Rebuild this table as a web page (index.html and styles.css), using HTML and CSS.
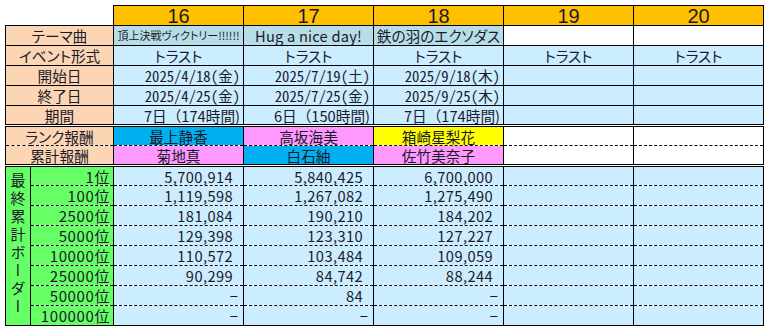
FILE: index.html
```html
<!DOCTYPE html>
<html lang="ja">
<head>
<meta charset="utf-8">
<link rel="stylesheet" href="styles.css">
</head>
<body>
<table class="sheet">
  <colgroup>
    <col class="c-vert"><col class="c-rank">
    <col class="c-data"><col class="c-data"><col class="c-data"><col class="c-data"><col class="c-data">
  </colgroup>
  <tr class="head">
    <td class="blank" colspan="2"></td>
    <td class="num">16</td><td class="num">17</td><td class="num">18</td><td class="num">19</td><td class="num">20</td>
  </tr>
  <tr>
    <td class="label" colspan="2">テーマ曲</td>
    <td class="theme small">頂上決戦ヴィクトリー!!!!!!</td>
    <td class="theme latin">Hug a nice day!</td>
    <td class="theme">鉄の羽のエクソダス</td>
    <td class="white"></td><td class="white"></td>
  </tr>
  <tr>
    <td class="label" colspan="2">イベント形式</td>
    <td class="val center">トラスト</td><td class="val center">トラスト</td><td class="val center">トラスト</td><td class="val center">トラスト</td><td class="val center">トラスト</td>
  </tr>
  <tr>
    <td class="label" colspan="2">開始日</td>
    <td class="val date">2025/4/18(金)</td><td class="val date">2025/7/19(土)</td><td class="val date">2025/9/18(木)</td><td class="val"></td><td class="val"></td>
  </tr>
  <tr>
    <td class="label" colspan="2">終了日</td>
    <td class="val date">2025/4/25(金)</td><td class="val date">2025/7/25(金)</td><td class="val date">2025/9/25(木)</td><td class="val"></td><td class="val"></td>
  </tr>
  <tr class="dbl-b">
    <td class="label" colspan="2">期間</td>
    <td class="val period">7日（174時間)</td><td class="val period">6日（150時間)</td><td class="val period">7日（174時間)</td><td class="val"></td><td class="val"></td>
  </tr>
  <tr class="dbl-t dash-b">
    <td class="label" colspan="2">ランク報酬</td>
    <td class="name blue">最上静香</td><td class="name pink">高坂海美</td><td class="name yellow">箱崎星梨花</td><td class="white"></td><td class="white"></td>
  </tr>
  <tr class="dash-t dbl-b">
    <td class="label" colspan="2">累計報酬</td>
    <td class="name pink">菊地真</td><td class="name blue">白石紬</td><td class="name pink">佐竹美奈子</td><td class="white"></td><td class="white"></td>
  </tr>
  <tr class="dbl-t dash-b">
    <td class="vert" rowspan="8"><span>最終累計ボーダー</span></td>
    <td class="rank">1位</td>
    <td class="val n">5,700,914</td><td class="val n">5,840,425</td><td class="val n">6,700,000</td><td class="val"></td><td class="val"></td>
  </tr>
  <tr class="dash-t dash-b">
    <td class="rank">100位</td>
    <td class="val n">1,119,598</td><td class="val n">1,267,082</td><td class="val n">1,275,490</td><td class="val"></td><td class="val"></td>
  </tr>
  <tr class="dash-t dash-b">
    <td class="rank">2500位</td>
    <td class="val n">181,084</td><td class="val n">190,210</td><td class="val n">184,202</td><td class="val"></td><td class="val"></td>
  </tr>
  <tr class="dash-t dash-b">
    <td class="rank">5000位</td>
    <td class="val n">129,398</td><td class="val n">123,310</td><td class="val n">127,227</td><td class="val"></td><td class="val"></td>
  </tr>
  <tr class="dash-t dash-b">
    <td class="rank">10000位</td>
    <td class="val n">110,572</td><td class="val n">103,484</td><td class="val n">109,059</td><td class="val"></td><td class="val"></td>
  </tr>
  <tr class="dash-t dash-b">
    <td class="rank">25000位</td>
    <td class="val n">90,299</td><td class="val n">84,742</td><td class="val n">88,244</td><td class="val"></td><td class="val"></td>
  </tr>
  <tr class="dash-t dash-b">
    <td class="rank">50000位</td>
    <td class="val dash">−</td><td class="val n">84</td><td class="val dash">−</td><td class="val"></td><td class="val"></td>
  </tr>
  <tr class="dash-t">
    <td class="rank">100000位</td>
    <td class="val dash">−</td><td class="val dash">−</td><td class="val dash">−</td><td class="val"></td><td class="val"></td>
  </tr>
</table>
</body>
</html>
```

FILE: styles.css
```css
html, body {
  margin: 0;
  padding: 0;
  background: #fff;
}

body {
  padding: 5px 0 0 5px;
  font-family: "Noto Sans CJK JP", "Noto Sans", sans-serif;
  font-feature-settings: "palt";
  color: #1a1a2a;
}

.sheet {
  border-collapse: collapse;
  table-layout: fixed;
  width: 759px;
}

.c-vert { width: 25px; }
.c-rank { width: 83px; }
.c-data { width: 130px; }

.sheet tr { height: 20px; }

.sheet td {
  border: 1px solid #000;
  padding: 0 3px;
  font-size: 14.67px;
  line-height: 17px;
  white-space: nowrap;
  overflow: hidden;
  text-align: right;
}

.sheet td.blank {
  border: none;
  border-bottom: 1px solid #000;
  background: #fff;
}

.sheet td.num {
  background: #ffc000;
  text-align: center;
  font-family: "Liberation Sans", "Noto Sans", sans-serif;
  font-size: 20px;
  line-height: 18px;
  overflow: visible;
}

.sheet td.label {
  background: #fcd5b4;
  text-align: center;
}

.sheet td.theme {
  background: #b7dee8;
  text-align: center;
  padding: 0 1px;
}

.sheet td.theme.latin {
  letter-spacing: 0.2px;
  font-feature-settings: normal;
}

.sheet td.theme.small {
  font-size: 11px;
}

.sheet td.white { background: #fff; }

.sheet td.val { background: #ccecff; }

.sheet td.date { font-feature-settings: "hwid"; }

.sheet td.period { font-feature-settings: normal; }

.sheet td.n {
  font-feature-settings: normal;
  letter-spacing: 0.4px;
  padding-right: 10px;
}

.sheet td.dash { padding-right: 5px; }

.sheet td.center { text-align: center; }

.sheet td.name { text-align: center; }
.sheet td.blue { background: #00b0f0; }
.sheet td.pink { background: #ff99ff; }
.sheet td.yellow { background: #ffff00; }

.sheet td.rank {
  background: #66ff66;
  text-align: right;
  font-size: 15px;
  letter-spacing: 0.6px;
  font-feature-settings: normal;
}

.sheet td.vert {
  background: #66ff66;
  text-align: center;
  vertical-align: middle;
  padding: 0;
}

.vert span {
  display: inline-block;
  writing-mode: vertical-rl;
  font-size: 15px;
  letter-spacing: 3px;
  line-height: 1;
}

.sheet tr.dbl-b td { border-bottom: 3px double #000; }
.sheet tr.dbl-t td { border-top: 3px double #000; }
.sheet tr.dash-b td { border-bottom: 1px dashed #000; }
.sheet tr.dash-t td { border-top: 1px dashed #000; }
.sheet tr.dash-b td.vert { border-bottom: 1px solid #000; }
```
